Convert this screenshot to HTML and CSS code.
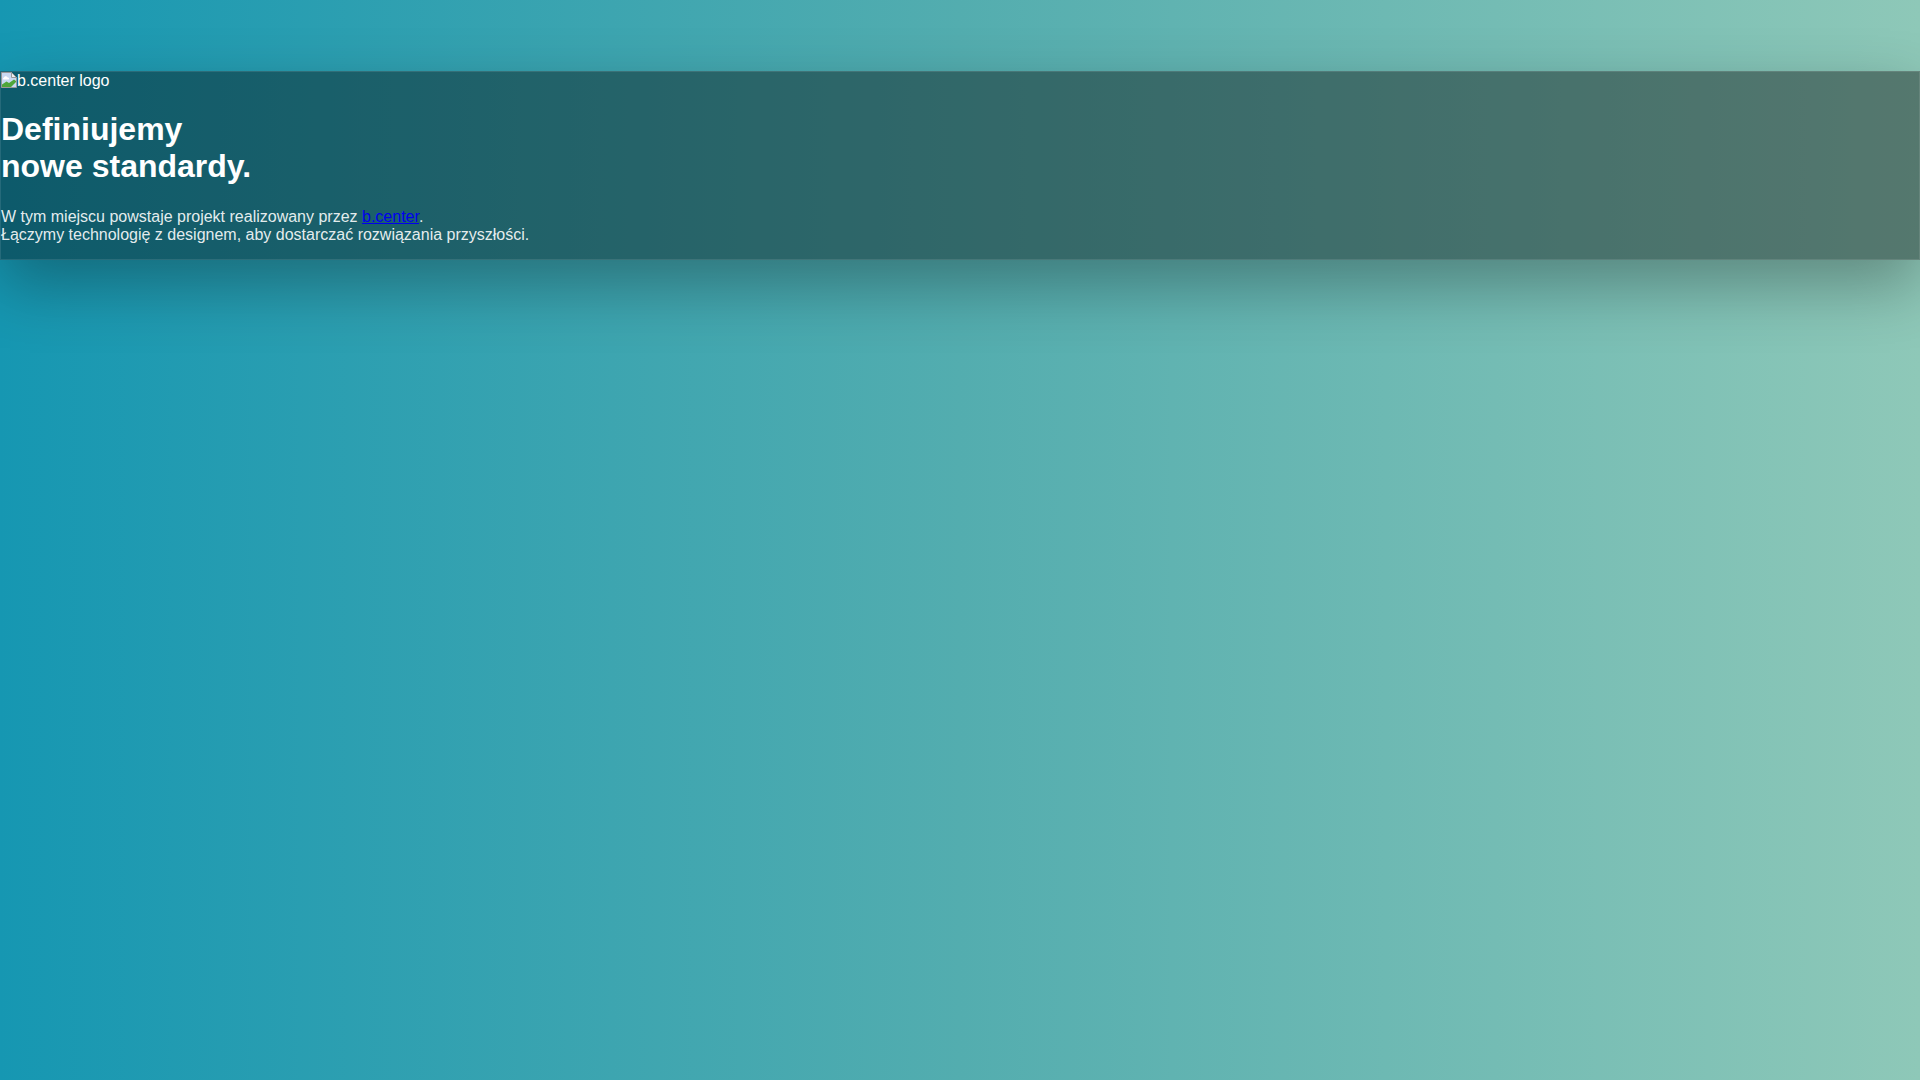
FILE: index.html
```html
<!DOCTYPE html>
<html lang="pl">
<head>
<meta charset="utf-8">
<title>b.center</title>
<link rel="stylesheet" href="styles.css">
</head>
<body>
<main class="card">
  <div class="logo"><svg class="broken" width="16" height="16" viewBox="0 0 16 16" aria-hidden="true"><path d="M0.500 0.500H10.500L15.500 5.500V15.500H0.500Z" fill="#c9d9f2" stroke="#9a9a9a"/><path d="M10.500 0.500V5.500H15.500Z" fill="#eeeeee" stroke="#9a9a9a"/><path d="M2.500 6c.8-2.200 3.200-2.400 4.200-.6 1.500-.2 2 1.600.8 2.100H2.800C1.800 7.500 1.600 6.300 2.500 6Z" fill="#ffffff"/><path d="M1 15V12.500L5.500 9.500L8 11L13 7.500L15 9V10L10 15Z" fill="#4fa63a"/></svg>b.center logo</div>
  <h1 class="title">Definiujemy<br>nowe standardy.</h1>
  <p class="lead">W tym miejscu powstaje projekt realizowany przez <a href="#">b.center</a>.<br>Łączymy technologię z designem, aby dostarczać rozwiązania przyszłości.</p>
</main>
</body>
</html>
```
FILE: styles.css
```css
html, body {
  margin: 0;
  height: 100%;
}
body {
  background: linear-gradient(90deg, #1697b2 0%, #53adaf 50%, #8ec8b8 100%);
  font-family: "Liberation Sans", Arial, sans-serif;
  font-size: 16px;
  color: #fff;
  padding-top: 71px;
  box-sizing: border-box;
  overflow: hidden;
}
.card {
  border: 1px solid rgba(255, 255, 255, 0.1);
  background: rgba(0, 0, 0, 0.4);
  box-shadow: 0 25px 60px rgba(0, 0, 0, 0.3);
}
.logo {
  display: flex;
  align-items: flex-start;
}
.broken {
  flex: none;
}
.title {
  font-size: 32px;
  font-weight: 700;
  margin: 21.44px 0 22.44px;
}
.lead {
  margin: 16px 0 15px;
  color: rgba(255, 255, 255, 0.9);
}
```
